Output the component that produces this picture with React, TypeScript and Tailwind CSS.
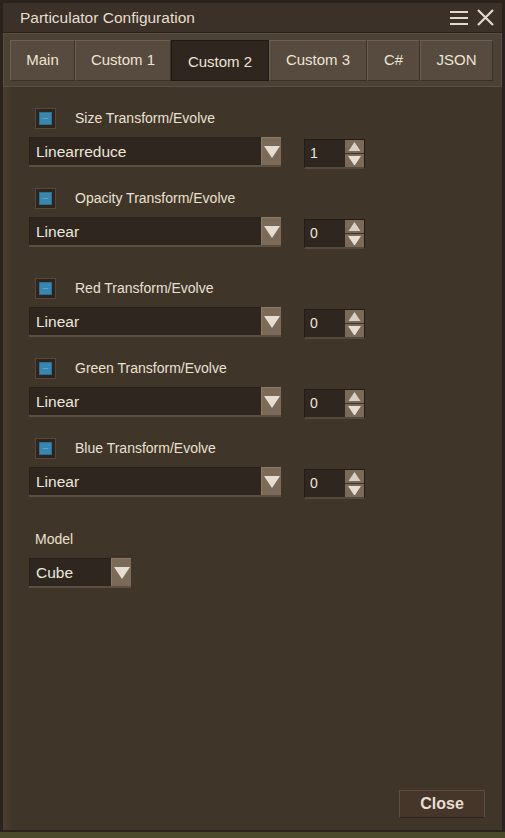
import React from "react";

const font = { fontFamily: '"Liberation Sans", Arial, sans-serif' };

function Checkbox() {
  return (
    <div className="w-[21px] h-[21px] bg-[#2c241d] border border-[#54483b] flex items-center justify-center">
      <div className="w-[13px] h-[13px] bg-[#3a86ad] border border-[#2c6f92] flex items-center justify-center">
        <div className="w-[5px] h-[1px] bg-[#5fa4c8]" />
      </div>
    </div>
  );
}

function Arrow({ up = false, size = 10 }: { up?: boolean; size?: number }) {
  return (
    <svg width={size} height={size * 0.75} viewBox="0 0 12 9">
      {up ? <path d="M6 0 L12 9 L0 9 Z" fill="#d8cfc2" /> : <path d="M0 0 L12 0 L6 9 Z" fill="#e6ded2" />}
    </svg>
  );
}

function Dropdown({ value, width }: { value: string; width: number }) {
  return (
    <div className="flex h-[30px] border-b-2 border-[#5c4f41]" style={{ width }}>
      <div className="flex-1 bg-[#2e261f] border-t border-l border-[#272019] flex items-center pl-[6px] text-[15.5px] text-[#ece6da]">
        {value}
      </div>
      <div className="w-[20px] bg-[#7b6a58] border-l border-t border-[#8a7966] flex items-center justify-center">
        <Arrow size={16} />
      </div>
    </div>
  );
}

function Spinner({ value }: { value: string }) {
  return (
    <div className="flex h-[30px] w-[61px] border border-[#241d17] border-b-2 border-b-[#55493c] mt-[2px]">
      <div className="flex-1 bg-[#2e261f] flex items-center pl-[5px] text-[14px] text-[#ece6da]">{value}</div>
      <div className="w-[19px] flex flex-col gap-[1px] bg-[#3a3027]">
        <div className="flex-1 bg-[#7b6a58] flex items-center justify-center">
          <Arrow up size={13} />
        </div>
        <div className="flex-1 bg-[#7b6a58] flex items-center justify-center">
          <Arrow size={13} />
        </div>
      </div>
    </div>
  );
}

function Group({ label, value, mt }: { label: string; value: string; mt: string }) {
  return (
    <div className={mt}>
      <div className="flex items-center h-[21px] pl-[6px]">
        <Checkbox />
        <span className="ml-[19px] text-[14px] text-[#e8e1d3]">{label}</span>
      </div>
      <div className="flex items-start mt-[8px]">
        <Dropdown value={value} width={252} />
        <div className="ml-[23px]">
          <Spinner value={value === "Linearreduce" ? "1" : "0"} />
        </div>
      </div>
    </div>
  );
}

const tabs = [
  { name: "Main", w: 65 },
  { name: "Custom 1", w: 96 },
  { name: "Custom 2", w: 98, active: true },
  { name: "Custom 3", w: 98 },
  { name: "C#", w: 53 },
  { name: "JSON", w: 73 },
];

export default function App() {
  return (
    <div className="w-[505px] h-[838px] bg-[#4a4a2a] flex flex-col" style={font}>
      <div className="h-[832px] bg-[#2a221c] pt-[3px] pl-[3px] pr-[3px] pb-[2px] flex flex-col">
        {/* Title bar */}
        <div className="h-[29px] bg-[#3b3128] flex items-center justify-between pl-[17px] pr-[8px]">
          <span className="text-[15.5px] text-[#e6ddcc]">Particulator Configuration</span>
          <div className="flex items-center gap-[9px]">
            <svg width="18" height="16" viewBox="0 0 18 16">
              <rect x="0" y="1" width="18" height="2" fill="#e2d9c9" />
              <rect x="0" y="7" width="18" height="2" fill="#e2d9c9" />
              <rect x="0" y="13" width="18" height="2" fill="#e2d9c9" />
            </svg>
            <svg width="17" height="17" viewBox="0 0 17 17">
              <path d="M1 1 L16 16 M16 1 L1 16" stroke="#e2d9c9" strokeWidth="2.2" />
            </svg>
          </div>
        </div>
        {/* Main window */}
        <div className="flex-1 bg-[#403529] mt-[1px] flex flex-col">
          <div className="h-[54px] bg-[#4b4134] border border-[#5a4e40] pt-[6px] pl-[6px]">
            <div className="flex h-[41px]">
              {tabs.map((t) => (
                <div
                  key={t.name}
                  className={
                    t.active
                      ? "h-[41px] bg-[#2f271f] border border-[#1f1914] flex items-center justify-center pt-[4px] text-[15px] text-[#ece4d6]"
                      : "h-[41px] bg-[#564b3e] border border-[#6c6051] border-r-[#3a3128] border-b-[#3a3128] flex items-center justify-center text-[15px] text-[#ece4d6]"
                  }
                  style={{ width: t.w }}
                >
                  {t.name}
                </div>
              ))}
            </div>
          </div>
          <div className="pl-[26px] flex-1 flex flex-col bg-gradient-to-r from-[#4a3e31] via-[#403529] to-[#403529] bg-[length:20px_100%] bg-no-repeat">
            <Group label="Size Transform/Evolve" value="Linearreduce" mt="mt-[21px]" />
            <Group label="Opacity Transform/Evolve" value="Linear" mt="mt-[19px]" />
            <Group label="Red Transform/Evolve" value="Linear" mt="mt-[29px]" />
            <Group label="Green Transform/Evolve" value="Linear" mt="mt-[19px]" />
            <Group label="Blue Transform/Evolve" value="Linear" mt="mt-[19px]" />
            <div className="mt-[32px] pl-[6px] text-[14px] text-[#e8e1d3] h-[16px] leading-[16px]">Model</div>
            <div className="mt-[11px]">
              <Dropdown value="Cube" width={102} />
            </div>
            <div className="flex-1" />
            <div className="flex justify-end pr-[17px] pb-[12px]">
              <div className="w-[86px] h-[28px] bg-[#46362a] border border-[#5e4e3f] border-b-[#2e241c] flex items-center justify-center text-[16px] font-bold text-[#e6dfd2]">
                Close
              </div>
            </div>
          </div>
        </div>
      </div>
    </div>
  );
}
